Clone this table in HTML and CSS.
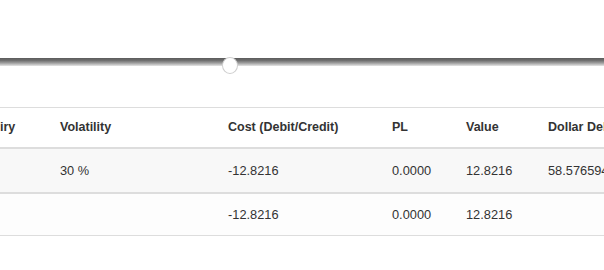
FILE: index.html
```html
<!DOCTYPE html>
<html>
<head>
<meta charset="utf-8">
<link rel="stylesheet" href="styles.css">
</head>
<body>
<div class="slider">
  <div class="track">
    <div class="thumb"></div>
  </div>
</div>
<div class="table-wrap">
  <table class="grid">
    <colgroup>
      <col class="c-exp"><col class="c-vol"><col class="c-cost"><col class="c-pl"><col class="c-val"><col class="c-dd">
    </colgroup>
    <thead>
      <tr><th>Expiry</th><th>Volatility</th><th>Cost (Debit/Credit)</th><th>PL</th><th>Value</th><th>Dollar Delta</th></tr>
    </thead>
    <tbody>
      <tr class="r1"><td></td><td>30 %</td><td>-12.8216</td><td>0.0000</td><td>12.8216</td><td>58.576594</td></tr>
      <tr class="r2"><td></td><td></td><td>-12.8216</td><td>0.0000</td><td>12.8216</td><td></td></tr>
    </tbody>
  </table>
</div>
</body>
</html>
```
FILE: styles.css
```css
html, body {
  margin: 0;
  padding: 0;
  background: #fff;
  overflow: hidden;
  width: 604px;
  height: 270px;
}
body {
  font-family: "Liberation Sans", Arial, sans-serif;
  color: #333;
}
.slider {
  padding-top: 58px;
}
.track {
  position: relative;
  height: 8px;
  background: linear-gradient(to bottom, #5c5c5c 0%, #6e6e6e 30%, #9a9a9a 60%, #c8c8c8 85%, #e6e6e6 100%);
}
.thumb {
  position: absolute;
  left: 222px;
  top: -1px;
  width: 14px;
  height: 15px;
  border: 1px solid #cfcfcf;
  border-radius: 50%;
  background: #fff;
}
.table-wrap {
  margin-top: 41px;
  overflow: hidden;
  width: 604px;
}
.grid {
  margin-left: -31px;
  width: 721px;
  table-layout: fixed;
  border-collapse: separate;
  border-spacing: 0;
  border-top: 1px solid #ddd;
}
.c-exp { width: 83px; }
.c-vol { width: 168px; }
.c-cost { width: 164px; }
.c-pl { width: 74px; }
.c-val { width: 82px; }
.c-dd { width: 150px; }
.grid th {
  text-align: left;
  font-weight: bold;
  font-size: 12.5px;
  line-height: 15px;
  padding: 12px 8px;
  border-bottom: 2px solid #ddd;
  white-space: nowrap;
}
.grid td {
  font-size: 12.8px;
  line-height: 15px;
  white-space: nowrap;
  padding: 0 8px;
}
.r1 td {
  background: #f8f8f8;
  padding-top: 14px;
  padding-bottom: 14px;
  border-bottom: 2px solid #ddd;
}
.r2 td {
  background: #fdfdfd;
  padding-top: 13px;
  padding-bottom: 13px;
  border-bottom: 1px solid #ddd;
}
```
